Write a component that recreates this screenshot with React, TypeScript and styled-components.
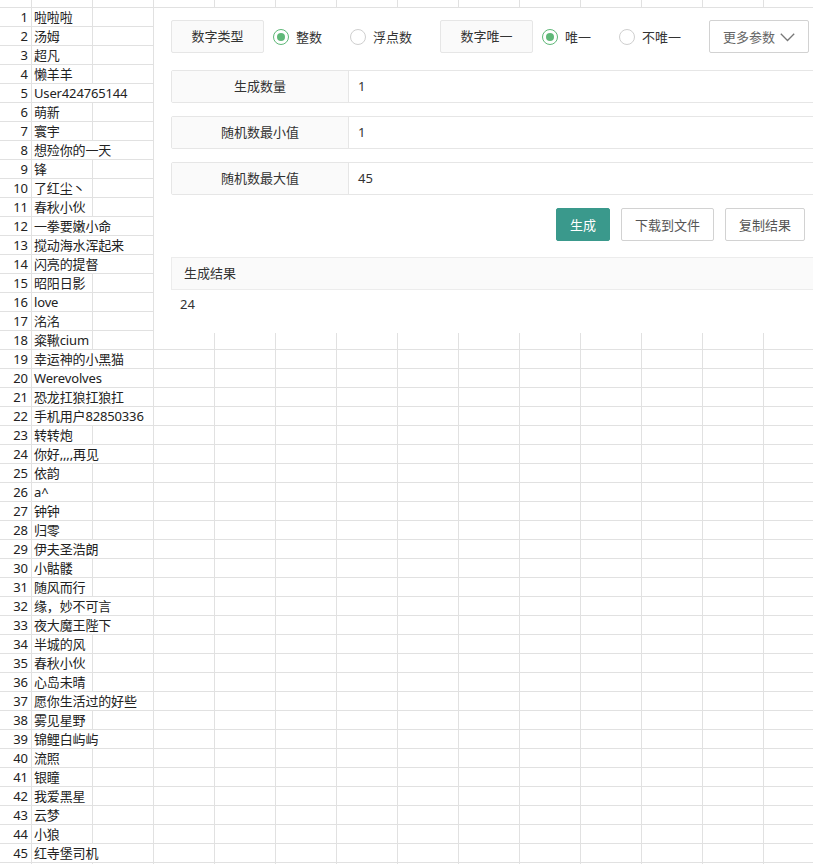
import styled, { createGlobalStyle } from 'styled-components';

const GlobalStyle = createGlobalStyle`
  html, body {
    margin: 0;
    padding: 0;
    overflow: hidden;
    background: #fff;
  }
  body {
    font-family: "Noto Sans", "Noto Sans CJK SC", sans-serif;
    font-size: 13px;
    color: #333;
  }
  * { box-sizing: border-box; }
`;

const names = [
  '啦啦啦', '汤姆', '超凡', '懒羊羊', 'User424765144', '萌新', '寰宇', '想殓你的一天', '锋',
  '了红尘丶', '春秋小伙', '一拳要嫩小命', '搅动海水浑起来', '闪亮的提督', '昭阳日影', 'love',
  '洺洺', '粢鞦cium', '幸运神的小黑猫', 'Werevolves', '恐龙扛狼扛狼扛', '手机用户82850336',
  '转转炮', '你好,,,,再见', '依韵', 'a^', '钟钟', '归零', '伊夫圣浩朗', '小骷髅', '随风而行',
  '缘，妙不可言', '夜大魔王陛下', '半城的风', '春秋小伙', '心岛未晴', '愿你生活过的好些',
  '雾见星野', '锦鲤白屿屿', '流照', '银瞳', '我爱黑星', '云梦', '小狼', '红寺堡司机',
];

const EXTRA_COLS = 12;

const Page = styled.div`
  position: relative;
  width: 813px;
  height: 864px;
  overflow: hidden;
`;

const Grid = styled.div`
  margin-top: -11px;
`;

const Row = styled.div`
  display: flex;
  height: 19px;
`;

const Cell = styled.div`
  flex: none;
  width: 61px;
  height: 19px;
  border-right: 1px solid #e1e1e1;
  border-bottom: 1px solid #e1e1e1;
  line-height: 18px;
  color: #222;
  white-space: nowrap;
`;

const NumCell = styled(Cell)`
  width: 32px;
  text-align: right;
  padding-right: 3px;
`;

const NameCell = styled(Cell)`
  padding-left: 2px;
  overflow: visible;
  letter-spacing: -0.15px;

  span {
    display: inline-block;
    height: 18px;
    background: #fff;
    padding-right: 1px;
  }
`;

const Panel = styled.div`
  position: absolute;
  left: 154px;
  top: 8px;
  width: 700px;
  height: 325px;
  background: #fff;
  padding: 12px 0 0 17px;
  display: flex;
  flex-direction: column;
`;

const TopBar = styled.div`
  display: flex;
  align-items: center;
  height: 33px;
  margin-bottom: 4px;
`;

const TagLabel = styled.div`
  width: 93px;
  height: 33px;
  line-height: 31px;
  text-align: center;
  background: #fafafa;
  border: 1px solid #e6e6e6;
  border-radius: 2px;
  color: #333;
  margin-right: 9px;
`;

const RadioItem = styled.label`
  display: flex;
  align-items: center;
  gap: 7px;
  margin-right: 28px;
  color: #333;
`;

const RadioDot = styled.span<{ $checked?: boolean }>`
  width: 16px;
  height: 16px;
  border-radius: 50%;
  border: 1.5px solid ${p => (p.$checked ? '#5fb878' : '#cfcfcf')};
  display: flex;
  align-items: center;
  justify-content: center;

  &::after {
    content: '';
    width: 8px;
    height: 8px;
    border-radius: 50%;
    background: ${p => (p.$checked ? '#5fb878' : 'transparent')};
  }
`;

const MoreButton = styled.button`
  display: flex;
  align-items: center;
  justify-content: center;
  gap: 5px;
  width: 100px;
  height: 33px;
  background: #fff;
  border: 1px solid #d2d2d2;
  border-radius: 2px;
  color: #666;
  font: inherit;
  padding: 0;

  svg {
    margin-top: 1px;
  }
`;

const Form = styled.div`
  display: flex;
  flex-direction: column;
  gap: 13px;
  margin-top: 13px;
`;

const FieldRow = styled.div`
  display: flex;
  width: 680px;
  height: 33px;
  border: 1px solid #e6e6e6;
  border-radius: 2px;
`;

const FieldLabel = styled.div`
  width: 177px;
  background: #fafafa;
  border-right: 1px solid #e6e6e6;
  text-align: center;
  line-height: 31px;
  color: #333;
`;

const FieldValue = styled.div`
  flex: 1;
  padding-left: 9px;
  line-height: 31px;
  color: #333;
`;

const ButtonRow = styled.div`
  display: flex;
  justify-content: flex-end;
  gap: 11px;
  width: 634px;
  margin-top: 13px;
`;

const Button = styled.button<{ $primary?: boolean }>`
  height: 33px;
  padding: 0 13px;
  font: inherit;
  border-radius: 2px;
  border: 1px solid ${p => (p.$primary ? '#3a998c' : '#d2d2d2')};
  background: ${p => (p.$primary ? '#3a998c' : '#fff')};
  color: ${p => (p.$primary ? '#fff' : '#555')};
`;

const ResultCard = styled.div`
  width: 680px;
  margin-top: 16px;
`;

const ResultHeader = styled.div`
  height: 33px;
  line-height: 31px;
  padding-left: 12px;
  background: #fafafa;
  border: 1px solid #ececec;
  border-right: none;
  color: #333;
`;

const ResultBody = styled.div`
  padding: 4px 9px;
  line-height: 20px;
  color: #333;
`;

const Chevron = () => (
  <svg width="15" height="9" viewBox="0 0 15 9" fill="none">
    <polyline points="0.8,0.8 7.5,7.5 14.2,0.8" stroke="#777" strokeWidth="1.3" />
  </svg>
);

export default function App() {
  const rows = ['', ...names, ''];
  return (
    <Page>
      <GlobalStyle />
      <Grid>
        {rows.map((name, i) => (
          <Row key={i}>
            <NumCell>{i > 0 && i <= names.length ? i : ''}</NumCell>
            <NameCell>{name && <span>{name}</span>}</NameCell>
            {Array.from({ length: EXTRA_COLS }).map((_, j) => (
              <Cell key={j} />
            ))}
          </Row>
        ))}
      </Grid>

      <Panel>
        <TopBar>
          <TagLabel>数字类型</TagLabel>
          <RadioItem>
            <RadioDot $checked />
            整数
          </RadioItem>
          <RadioItem>
            <RadioDot />
            浮点数
          </RadioItem>
          <TagLabel>数字唯一</TagLabel>
          <RadioItem>
            <RadioDot $checked />
            唯一
          </RadioItem>
          <RadioItem>
            <RadioDot />
            不唯一
          </RadioItem>
          <MoreButton>
            更多参数
            <Chevron />
          </MoreButton>
        </TopBar>

        <Form>
          <FieldRow>
            <FieldLabel>生成数量</FieldLabel>
            <FieldValue>1</FieldValue>
          </FieldRow>
          <FieldRow>
            <FieldLabel>随机数最小值</FieldLabel>
            <FieldValue>1</FieldValue>
          </FieldRow>
          <FieldRow>
            <FieldLabel>随机数最大值</FieldLabel>
            <FieldValue>45</FieldValue>
          </FieldRow>
        </Form>

        <ButtonRow>
          <Button $primary>生成</Button>
          <Button>下载到文件</Button>
          <Button>复制结果</Button>
        </ButtonRow>

        <ResultCard>
          <ResultHeader>生成结果</ResultHeader>
          <ResultBody>24</ResultBody>
        </ResultCard>
      </Panel>
    </Page>
  );
}
